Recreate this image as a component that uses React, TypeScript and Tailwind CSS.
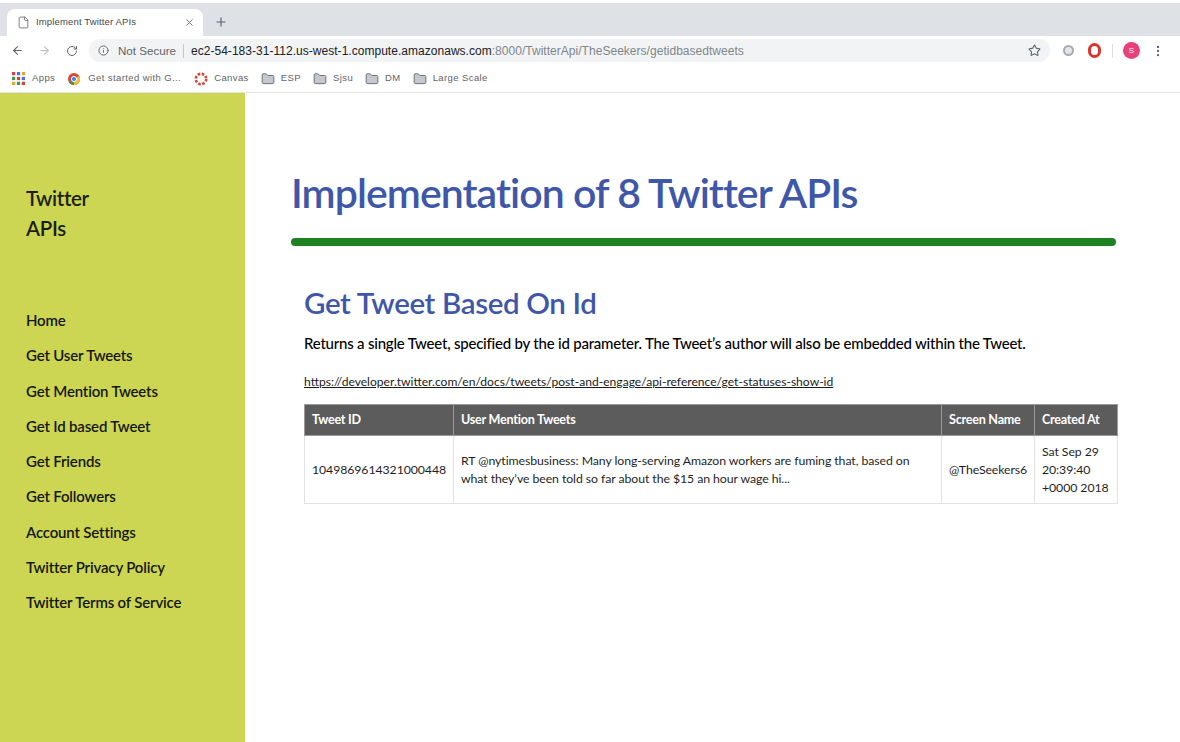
import { ArrowLeft, ArrowRight, Folder, Info, Plus, RotateCw, Star, X, File, EllipsisVertical } from "lucide-react";

const navItems = [
  "Home",
  "Get User Tweets",
  "Get Mention Tweets",
  "Get Id based Tweet",
  "Get Friends",
  "Get Followers",
  "Account Settings",
  "Twitter Privacy Policy",
  "Twitter Terms of Service",
];

function BookmarkFolder({ label }: { label: string }) {
  return (
    <div className="flex items-center gap-[6px]">
      <Folder size={14} className="text-[#5f6368] fill-[#c4c7cb]" strokeWidth={1.5} />
      <span>{label}</span>
    </div>
  );
}

function BrowserBar() {
  return (
    <div className="font-['Liberation_Sans',sans-serif] text-[#5f6368] bg-white">
      <div className="h-[3px] bg-white" />
      <div className="h-[33px] bg-[#dee1e6] flex items-end pl-[7px]">
        <div className="w-[196px] h-[27px] bg-white rounded-t-lg flex items-center pl-[10px] pr-[8px] text-[9.5px] text-[#45484c]">
          <File size={13} strokeWidth={1.5} className="text-[#5f6368]" />
          <span className="ml-[6px] flex-1 tracking-[0.15px]">Implement Twitter APIs</span>
          <X size={11} className="text-[#5f6368]" />
        </div>
        <Plus size={14} className="ml-[11px] mb-[7px] text-[#5f6368]" />
      </div>
      <div className="h-[29px] flex items-center pl-[11px]">
        <ArrowLeft size={13} className="text-[#5f6368]" />
        <ArrowRight size={13} className="ml-[14px] text-[#bcbfc3]" />
        <RotateCw size={12} className="ml-[15px] text-[#5f6368]" />
        <div className="ml-[11px] w-[961px] h-[23px] bg-[#f1f3f4] rounded-full flex items-center pl-[9px] pr-[9px] text-[11.6px]">
          <Info size={11} className="text-[#5f6368]" />
          <span className="ml-[9px]">Not Secure</span>
          <span className="mx-[7px] w-px h-[14px] bg-[#c4c7cb]" />
          <span className="flex-1 text-[12px] tracking-[0.03px]">
            <span className="text-[#202124]">ec2-54-183-31-112.us-west-1.compute.amazonaws.com</span>
            <span className="text-[#80868b]">:8000/TwitterApi/TheSeekers/getidbasedtweets</span>
          </span>
          <Star size={13} className="text-[#5f6368]" />
        </div>
        <div className="ml-[13px] w-[11px] h-[11px] rounded-full border-2 border-[#a8abae] bg-[#e4e5e6]" />
        <div className="ml-[14px] w-[13px] h-[15px] rounded-full border-[3px] border-[#d9352c] bg-white" />
        <div className="ml-[11px] w-px h-[14px] bg-[#dadce0]" />
        <div className="ml-[10px] w-[17px] h-[17px] rounded-full bg-[#e8407a] text-white text-[8px] flex items-center justify-center">
          S
        </div>
        <EllipsisVertical size={14} className="ml-[11px] text-[#5f6368]" />
      </div>
      <div className="h-[28px] flex items-center pl-[12px] text-[9.5px] tracking-[0.4px] border-b border-[#e4e5e7]">
        <svg width="13" height="13" viewBox="0 0 12 12">
          <rect x="0" y="0" width="3" height="3" fill="#d0453a" />
          <rect x="4.5" y="0" width="3" height="3" fill="#3f78d8" />
          <rect x="9" y="0" width="3" height="3" fill="#e4a72c" />
          <rect x="0" y="4.5" width="3" height="3" fill="#3d9a57" />
          <rect x="4.5" y="4.5" width="3" height="3" fill="#d0453a" />
          <rect x="9" y="4.5" width="3" height="3" fill="#3f78d8" />
          <rect x="0" y="9" width="3" height="3" fill="#e4a72c" />
          <rect x="4.5" y="9" width="3" height="3" fill="#3d9a57" />
          <rect x="9" y="9" width="3" height="3" fill="#d0453a" />
        </svg>
        <span className="ml-[7px]">Apps</span>
        <svg className="ml-[13px]" width="12" height="12" viewBox="0 0 12 12">
          <circle cx="6" cy="6" r="6" fill="#d9463a" />
          <path d="M6 6 L11.2 9 A6 6 0 0 1 1 9.3 Z" fill="#3b9a55" />
          <path d="M6 6 L6 12 A6 6 0 0 0 11.2 3 Z" fill="#f2bd32" />
          <circle cx="6" cy="6" r="2.6" fill="#4a84e0" stroke="#fff" strokeWidth="1" />
        </svg>
        <span className="ml-[8px]">Get started with G...</span>
        <svg className="ml-[13px]" width="14" height="14" viewBox="0 0 14 14">
          <circle cx="7" cy="7" r="5.2" fill="none" stroke="#d8483a" strokeWidth="2.6" strokeDasharray="2.6 1.5" />
        </svg>
        <span className="ml-[6px]">Canvas</span>
        <div className="ml-[12px] flex items-center gap-[12px]">
          <BookmarkFolder label="ESP" />
          <BookmarkFolder label="Sjsu" />
          <BookmarkFolder label="DM" />
          <BookmarkFolder label="Large Scale" />
        </div>
      </div>
    </div>
  );
}

function Sidebar() {
  return (
    <aside className="w-[245px] shrink-0 bg-[#cdd653] pl-[26px] pt-[90px] text-black">
      <div className="text-[20.5px] leading-[30px] font-semibold tracking-[-0.35px] text-[#1c1f0a]">
        Twitter
        <br />
        APIs
      </div>
      <nav className="mt-[66px] flex flex-col gap-[12.3px] text-[15px] leading-[23px] font-semibold tracking-[-0.17px]">
        {navItems.map((item) => (
          <a key={item} className="text-[#15170a]">
            {item}
          </a>
        ))}
      </nav>
    </aside>
  );
}

function TweetTable() {
  return (
    <table className="mt-[13px] ml-[13px] w-[814px] border-collapse table-fixed text-[12.3px] tracking-[-0.08px] text-[#1f1f1f]">
      <thead>
        <tr className="h-[31px] bg-[#5c5c5c] text-white text-left text-[12.6px] tracking-[-0.25px]">
          <th className="w-[149px] px-[7px] font-bold border border-[#9a9a9a]">Tweet ID</th>
          <th className="w-[488px] px-[7px] font-bold border border-[#9a9a9a]">User Mention Tweets</th>
          <th className="w-[93px] px-[7px] font-bold border border-[#9a9a9a]">Screen Name</th>
          <th className="px-[7px] font-bold border border-[#9a9a9a]">Created At</th>
        </tr>
      </thead>
      <tbody>
        <tr className="h-[68px] leading-[18px]">
          <td className="px-[7px] border border-[#e2e2e2]">1049869614321000448</td>
          <td className="px-[7px] border border-[#e2e2e2] whitespace-nowrap">
            RT @nytimesbusiness: Many long-serving Amazon workers are fuming that, based on
            <br />
            what they’ve been told so far about the $15 an hour wage hi...
          </td>
          <td className="px-[7px] border border-[#e2e2e2]">@TheSeekers6</td>
          <td className="px-[7px] border border-[#e2e2e2] whitespace-nowrap">
            Sat Sep 29
            <br />
            20:39:40
            <br />
            +0000 2018
          </td>
        </tr>
      </tbody>
    </table>
  );
}

export default function App() {
  return (
    <div className="w-[1180px] h-[742px] overflow-hidden flex flex-col bg-white font-['Lato',sans-serif]">
      <BrowserBar />
      <div className="flex flex-1 min-h-0">
        <Sidebar />
        <main className="flex-1 pl-[46px] pt-[72px]">
          <h1 className="text-[41px] leading-[56px] font-semibold text-[#3f57a8] tracking-[-0.93px]">
            Implementation of 8 Twitter APIs
          </h1>
          <div className="mt-[17px] w-[825px] h-[8px] rounded-full bg-[#1e8220]" />
          <h2 className="mt-[37px] ml-[13px] text-[29.5px] leading-[40px] font-semibold text-[#3f57a8] tracking-[-0.36px]">
            Get Tweet Based On Id
          </h2>
          <p className="mt-[9px] ml-[13px] text-[15px] leading-[22px] font-medium text-black tracking-[-0.22px]">
            Returns a single Tweet, specified by the id parameter. The Tweet’s author will also be embedded within the Tweet.
          </p>
          <a className="block mt-[19px] ml-[13px] text-[12.1px] leading-[18px] underline text-[#1a1a1a]">
            https://developer.twitter.com/en/docs/tweets/post-and-engage/api-reference/get-statuses-show-id
          </a>
          <TweetTable />
        </main>
      </div>
    </div>
  );
}
